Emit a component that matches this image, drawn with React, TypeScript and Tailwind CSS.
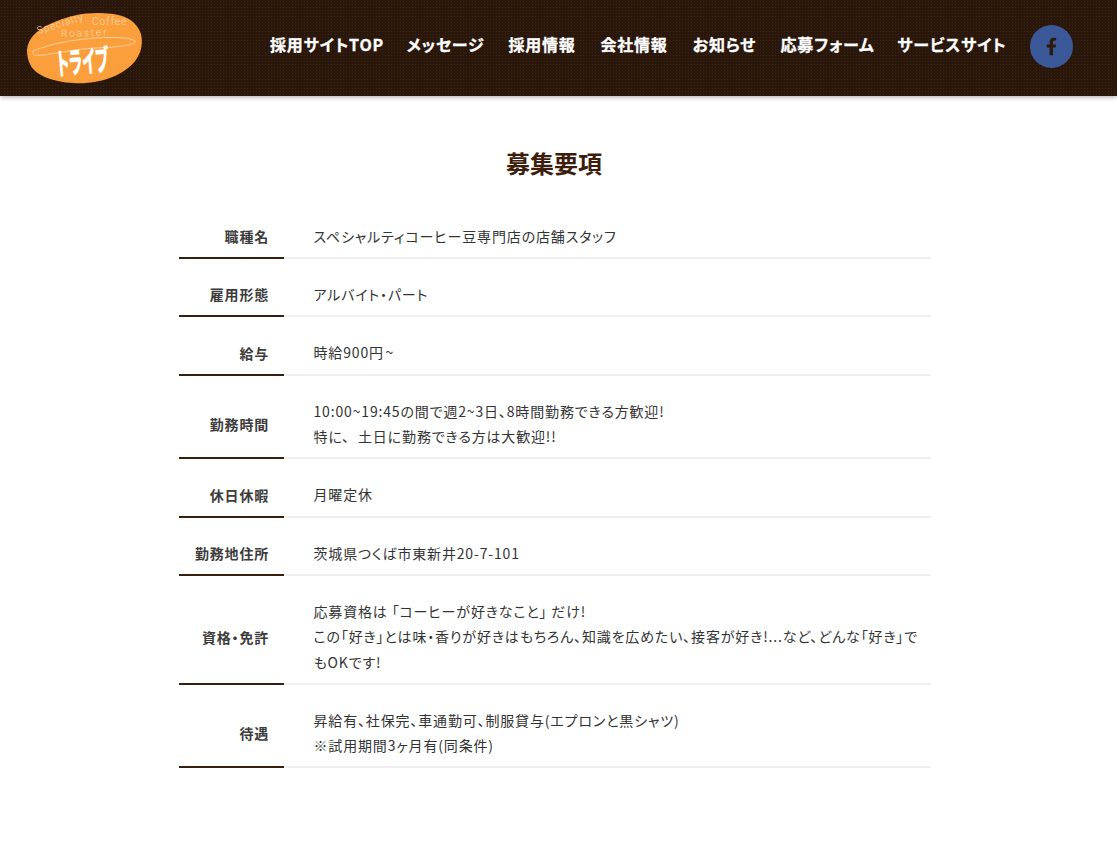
const rows: { label: string; lines: string[] }[] = [
  { label: "職種名", lines: ["スペシャルティコーヒー豆専門店の店舗スタッフ"] },
  { label: "雇用形態", lines: ["アルバイト・パート"] },
  { label: "給与", lines: ["時給900円\u200a~"] },
  { label: "勤務時間", lines: ["10:00~19:45の間で週2~3日、8時間勤務できる方歓迎!", "特に、\u00a0 土日に勤務できる方は大歓迎!!"] },
  { label: "休日休暇", lines: ["月曜定休"] },
  { label: "勤務地住所", lines: ["茨城県つくば市東新井20-7-101"] },
  { label: "資格・免許", lines: ["応募資格は 「コーヒーが好きなこと」 だけ!", "この「好き」とは味・香りが好きはもちろん、知識を広めたい、接客が好き!...など、どんな「好き」でもOKです!"] },
  { label: "待遇", lines: ["昇給有、社保完、車通勤可、制服貸与(エプロンと黒シャツ)", "※試用期間3ヶ月有(同条件)"] },
];

const nav: { text: string; width: string }[] = [
  { text: "採用サイトTOP", width: "w-[112px]" },
  { text: "メッセージ", width: "w-[77px]" },
  { text: "採用情報", width: "w-[68px]" },
  { text: "会社情報", width: "w-[68px]" },
  { text: "お知らせ", width: "w-[65px]" },
  { text: "応募フォーム", width: "w-[93px]" },
  { text: "サービスサイト", width: "w-[108px]" },
];

function Logo() {
  const ink = "#ffdcb4";
  return (
    <svg width="118" height="76" viewBox="0 0 118 76" className="shrink-0">
      <path d="M2 40C3 28 12 20 25 14C42 6 58 3 72 3C92 3 110 6 116 24C120 42 110 56 92 65C78 72 60 74 48 73C30 72 10 66 5 54C3 50 2 46 2 40Z" fill="#fb9f3c" />
      <path d="M8 41C20 36 42 30 70 28C88 27 104 27 110 31C112 34 100 36 88 37C70 38 52 39 38 42C26 44 11 47 8 44Z" fill="none" stroke={ink} strokeWidth="0.8" />
      <text x="13" y="24" transform="rotate(-17 13 24)" fontSize="10" letterSpacing="1" fill={ink} fontFamily="Roboto, sans-serif" fontWeight="300">Specialty</text>
      <text x="67" y="15" fontSize="10" letterSpacing="1.1" fill={ink} fontFamily="Roboto, sans-serif" fontWeight="300">Coffee</text>
      <text x="36" y="27" transform="rotate(-2 36 27)" fontSize="10" letterSpacing="1.9" fill={ink} fontFamily="Roboto, sans-serif" fontWeight="300">Roaster</text>
      <text transform="translate(33 65) rotate(-5) scale(0.62 1.3)" fontSize="23" fontWeight="900" fill="#ffffff" letterSpacing="0.5" fontFamily="'Noto Sans CJK JP', sans-serif">トライブ</text>
    </svg>
  );
}

export default function App() {
  return (
    <div className="min-h-[851px] bg-white [font-family:'Noto_Sans_CJK_JP','Noto_Sans',sans-serif] [font-feature-settings:'palt'] tracking-[0.05em] text-[#333333]">
      <header className="h-[96px] bg-[#2f1a0e] bg-[radial-gradient(circle,#3c2414_35%,#2a170c_40%)] bg-[size:3px_3px] shadow-[0_1px_5px_rgba(0,0,0,0.35)] flex items-center justify-between pl-[25px] pr-[44px]">
        <Logo />
        <nav className="flex items-center gap-[24px] mb-[3px]">
          {nav.map((n) => (
            <a key={n.text} className={`${n.width} flex justify-center pb-[5px] text-white font-bold [-webkit-text-stroke:0.3px_white] text-[16px] whitespace-nowrap`}>{n.text}</a>
          ))}
          <span className="w-[43px] h-[43px] rounded-full bg-[#3b5998] flex items-center justify-center">
            <svg width="11" height="19" viewBox="0 0 320 512" fill="#2f1a0e"><path d="M279 288l14-93h-89v-60c0-25 12-50 52-50h41V6S260 0 225 0c-73 0-121 44-121 125v70H22v93h82v224h100V288z" /></svg>
          </span>
        </nav>
      </header>
      <main className="w-[752px] ml-[179px] pt-[49px]">
        <h1 className="text-center pr-[2px] text-[24px] leading-[36px] font-bold tracking-normal text-[#3d1e0c] mb-[19.4px]">募集要項</h1>
        <div>
          {rows.map((r) => (
            <div key={r.label} className="flex">
              <div className="w-[105px] shrink-0 border-b-2 border-[#35200f] pr-[15px] pt-[16px] flex items-center justify-end font-bold text-[14px] text-[#3c3c3c] whitespace-nowrap">{r.label}</div>
              <div className="flex-1 border-b-2 border-[#efefef] pl-[29.5px] pr-[10px] pt-[23.2px] pb-[8px] text-[14px] leading-[25.2px] tracking-[0.06em]">
                {r.lines.map((l) => (
                  <p key={l}>{l}</p>
                ))}
              </div>
            </div>
          ))}
        </div>
      </main>
    </div>
  );
}
